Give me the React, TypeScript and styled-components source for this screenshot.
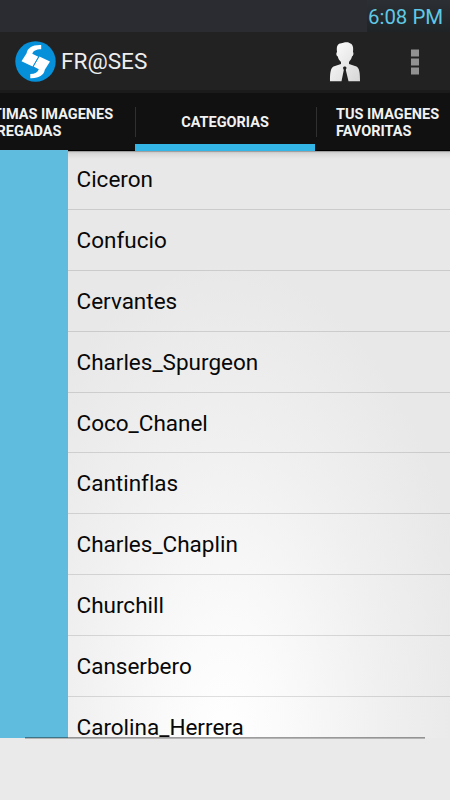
import React from "react";
import styled, { createGlobalStyle } from "styled-components";

const GlobalStyle = createGlobalStyle`
  * { box-sizing: border-box; }
  body { margin: 0; font-family: Roboto, sans-serif; overflow: hidden; }
`;

const Screen = styled.main`
  width: 450px;
  height: 800px;
  display: flex;
  flex-direction: column;
  background: #eaeaea;
  overflow: hidden;
`;

const StatusBar = styled.div`
  height: 32px;
  flex: none;
  display: flex;
  justify-content: flex-end;
  background: #2a2c31;
`;

const Clock = styled.time`
  width: 83px;
  height: 32px;
  padding-left: 1px;
  line-height: 34px;
  font-size: 20.4px;
  color: #5fc9e5;
  background: linear-gradient(#2c2f33, #202326);
  white-space: nowrap;
`;

const ActionBar = styled.header`
  height: 61px;
  flex: none;
  display: flex;
  align-items: center;
  padding: 1px 0 0 15px;
  background: #222;
  border-bottom: 3px solid #1b1b1b;
`;

const Title = styled.h1`
  flex: 1;
  margin: 1px 0 0 5px;
  font-size: 22.6px;
  line-height: 28px;
  font-weight: 400;
  color: #eee;
`;

const IconButton = styled.button<{ $width: number }>`
  width: ${(p) => p.$width}px;
  height: 57px;
  border: 0;
  padding: 1px 0 0;
  background: none;
  display: flex;
  align-items: center;
  justify-content: center;
`;

const TabBar = styled.nav`
  height: 58px;
  flex: none;
  display: flex;
  margin-left: -45px;
  background: #111;
`;

const Tab = styled.button<{ $selected?: boolean; $wide?: boolean }>`
  position: relative;
  width: 180px;
  height: 58px;
  flex: none;
  border: 0;
  border-bottom: ${(p) => (p.$selected ? "7px solid #33b5e5" : "1px solid #000")};
  padding: ${(p) => (p.$selected ? "8px 0 0" : "3px 0 0")};
  padding-left: ${(p) => (p.$wide ? "21px" : "0")};
  background: #111;
  color: #f2f2f2;
  font: 700 14.5px/17px Roboto, sans-serif;
  text-align: ${(p) => (p.$wide ? "left" : "center")};

  &:not(:first-child)::before {
    content: "";
    position: absolute;
    left: ${(p) => (p.$wide ? "1px" : "0")};
    top: 14px;
    width: 1px;
    height: 30px;
    background: #303030;
  }
`;

const TabLabel = styled.span<{ $shift?: number }>`
  display: inline-block;
  text-align: left;
  white-space: pre;
  margin-left: ${(p) => p.$shift ?? 0}px;
`;

const Content = styled.section`
  height: 588px;
  margin-top: -1px;
  flex: none;
  display: flex;
  position: relative;
`;

const SidePanel = styled.aside`
  width: 67.5px;
  flex: none;
  position: relative;
  background: #60bcdf;
`;

const List = styled.ul`
  flex: 1;
  min-width: 0;
  margin: 1px 0 0;
  padding: 0;
  list-style: none;
  overflow: hidden;
  background:
    linear-gradient(#777 0, #c9c9c9 1px, #dadada 3px, rgba(225, 225, 225, 0) 8px) top / 100% 8px no-repeat,
    radial-gradient(ellipse 252px 475px at 157px 587px, #fff 0%, #fafafa 25%, #f0f0f0 62%, #e8e8e8 100%);
`;

const Row = styled.li`
  height: 60.875px;
  padding-left: 9px;
  font-size: 22.5px;
  line-height: 60px;
  color: #080808;
  white-space: nowrap;
  font-variant-ligatures: none;
  border-bottom: 1px solid rgba(0, 0, 0, 0.12);

  &:first-child { margin-top: -2px; }
`;

const BottomRule = styled.div`
  position: absolute;
  left: 25px;
  right: 25px;
  bottom: -1px;
  height: 2px;
  background: linear-gradient(rgba(0, 0, 0, 0.38) 50%, rgba(0, 0, 0, 0.23) 50%);
`;

const Logo = () => (
  <svg width="41" height="41" viewBox="0 0 41 41">
    <circle cx="20.5" cy="20.5" r="20.2" fill="#0790da" />
    <g fill="#fff">
      <path d="M6.5 20.3 L11.6 12.2 C12.5 7 17.5 3.6 26.2 4 V8.2 C21 8.2 18.2 9.8 17.3 12.8 L23.3 15.7 L17.6 25.6 Z" />
      <path d="M35 20.5 L29.8 28.8 C29 34 24 37.6 15.3 37.2 V33 C20 32.8 22.8 31.2 23.8 28.2 L18.5 25.6 L24.4 15.4 Z" />
    </g>
    <path d="M23.9 15.4 L18 25.8" stroke="#0790da" strokeWidth="0.9" />
  </svg>
);

const Person = () => (
  <svg width="32" height="42" viewBox="0 0 32 42">
    <defs>
      <linearGradient id="silver" x1="0" y1="0" x2="1" y2="1">
        <stop stopColor="#fff" />
        <stop offset="1" stopColor="#d6d6d6" />
      </linearGradient>
    </defs>
    <path
      fill="url(#silver)"
      d="M10 2.8 L13.5 2 L16 1.2 L19 1.2 L22.5 3 C24.5 5 24.3 8 24 11 C25 12 24.3 15 23 15.5 C22.5 18 21 19.5 20 21 V23 L27.5 25.5 C30.3 27.5 31 31 31 40.3 H19.5 L16.8 29 L17.6 26.7 L16.5 25.5 H15 L13.9 26.7 L14.8 29 L12.5 40.3 H1 C1 31 1.7 27.5 4.5 25.5 L12 23 V21 C10.5 19.5 9.3 18 8.8 15.5 C7.2 15 6.9 12 8 11 C7.5 7 7.7 4.5 10 2.8 Z"
    />
  </svg>
);

const Overflow = () => (
  <svg width="8" height="26" viewBox="0 0 8 26" fill="#919191">
    <rect width="8" height="7" y="0.5" />
    <rect width="8" height="7" y="9.5" />
    <rect width="8" height="7" y="18.5" />
  </svg>
);

const authors = [
  "Ciceron",
  "Confucio",
  "Cervantes",
  "Charles_Spurgeon",
  "Coco_Chanel",
  "Cantinflas",
  "Charles_Chaplin",
  "Churchill",
  "Canserbero",
  "Carolina_Herrera",
];

export default function App() {
  return (
    <Screen>
      <GlobalStyle />
      <StatusBar>
        <Clock>6:08 PM</Clock>
      </StatusBar>
      <ActionBar>
        <Logo />
        <Title>FR@SES</Title>
        <IconButton $width={70} aria-label="Perfil"><Person /></IconButton>
        <IconButton $width={70} aria-label="Menu"><Overflow /></IconButton>
      </ActionBar>
      <TabBar>
        <Tab $wide>
          <TabLabel $shift={1}>{"ULTIMAS IMAGENES\nAGREGADAS"}</TabLabel>
        </Tab>
        <Tab $selected><TabLabel>CATEGORIAS</TabLabel></Tab>
        <Tab $wide><TabLabel>{"TUS IMAGENES\nFAVORITAS"}</TabLabel></Tab>
      </TabBar>
      <Content>
        <SidePanel />
        <List>
          {authors.map((name) => (
            <Row key={name}>{name}</Row>
          ))}
        </List>
        <BottomRule />
      </Content>
    </Screen>
  );
}
